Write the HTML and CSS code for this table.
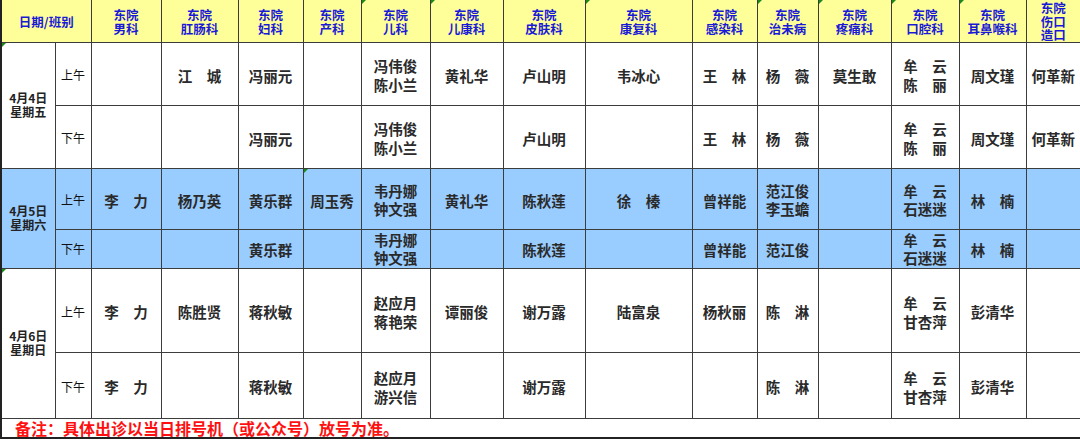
FILE: index.html
```html
<!DOCTYPE html>
<html lang="zh-CN">
<head>
<meta charset="utf-8">
<title>东院门诊排班表</title>
<link rel="stylesheet" href="styles.css">
</head>
<body>
<table class="sched">
  <colgroup>
    <col class="c-date"><col class="c-shift">
    <col class="w70"><col class="w77"><col class="w65"><col class="w58">
    <col class="w69"><col class="w73"><col class="w82"><col class="w107">
    <col class="w65"><col class="w61"><col class="w73"><col class="w68">
    <col class="w67"><col class="w55">
  </colgroup>
  <thead>
    <tr class="r-head">
      <th colspan="2" class="h-date">日期/班别</th>
      <th>东院<br>男科</th>
      <th>东院<br>肛肠科</th>
      <th>东院<br>妇科</th>
      <th>东院<br>产科</th>
      <th class="mk">东院<br>儿科</th>
      <th class="mk">东院<br>儿康科</th>
      <th>东院<br>皮肤科</th>
      <th class="mk">东院<br>康复科</th>
      <th>东院<br>感染科</th>
      <th class="mk">东院<br>治未病</th>
      <th class="mk">东院<br>疼痛科</th>
      <th class="mk">东院<br>口腔科</th>
      <th class="mk">东院<br>耳鼻喉科</th>
      <th class="h-3">东院<br>伤口<br>造口</th>
    </tr>
  </thead>
  <tbody>
    <tr class="r-a">
      <td rowspan="2" class="date mk">4月4日<br>星期五</td>
      <td class="shift">上午</td>
      <td></td><td>江　城</td><td>冯丽元</td><td></td>
      <td class="two">冯伟俊<br>陈小兰</td><td>黄礼华</td><td>卢山明</td><td>韦冰心</td>
      <td>王　林</td><td>杨　薇</td><td>莫生敢</td><td class="two">牟　云<br>陈　丽</td>
      <td>周文瑾</td><td>何革新</td>
    </tr>
    <tr class="r-a">
      <td class="shift">下午</td>
      <td></td><td></td><td>冯丽元</td><td></td>
      <td class="two">冯伟俊<br>陈小兰</td><td></td><td>卢山明</td><td></td>
      <td>王　林</td><td>杨　薇</td><td></td><td class="two">牟　云<br>陈　丽</td>
      <td>周文瑾</td><td>何革新</td>
    </tr>
    <tr class="r-b1 blue">
      <td rowspan="2" class="date">4月5日<br>星期六</td>
      <td class="shift">上午</td>
      <td>李　力</td><td>杨乃英</td><td>黄乐群</td><td class="mk">周玉秀</td>
      <td class="two">韦丹娜<br>钟文强</td><td>黄礼华</td><td>陈秋莲</td><td>徐　榛</td>
      <td>曾祥能</td><td class="two">范江俊<br>李玉蟾</td><td></td><td class="two">牟　云<br>石迷迷</td>
      <td>林　楠</td><td></td>
    </tr>
    <tr class="r-b2 blue">
      <td class="shift">下午</td>
      <td></td><td></td><td>黄乐群</td><td></td>
      <td class="two">韦丹娜<br>钟文强</td><td></td><td>陈秋莲</td><td></td>
      <td>曾祥能</td><td>范江俊</td><td></td><td class="two">牟　云<br>石迷迷</td>
      <td>林　楠</td><td></td>
    </tr>
    <tr class="r-c1">
      <td rowspan="2" class="date mk">4月6日<br>星期日</td>
      <td class="shift">上午</td>
      <td>李　力</td><td>陈胜贤</td><td>蒋秋敏</td><td></td>
      <td class="two">赵应月<br>蒋艳荣</td><td>谭丽俊</td><td>谢万露</td><td>陆富泉</td>
      <td>杨秋丽</td><td>陈　淋</td><td></td><td class="two">牟　云<br>甘杏萍</td>
      <td>彭清华</td><td></td>
    </tr>
    <tr class="r-c2">
      <td class="shift">下午</td>
      <td>李　力</td><td></td><td>蒋秋敏</td><td></td>
      <td class="two">赵应月<br>游兴信</td><td></td><td>谢万露</td><td></td>
      <td></td><td>陈　淋</td><td></td><td class="two">牟　云<br>甘杏萍</td>
      <td>彭清华</td><td></td>
    </tr>
    <tr class="r-note">
      <td colspan="16" class="note">备注：具体出诊以当日排号机（或公众号）放号为准。</td>
    </tr>
  </tbody>
</table>
</body>
</html>
```

FILE: styles.css
```css
html, body {
  margin: 0;
  padding: 0;
  background: #ffffff;
}

.sched {
  border-collapse: collapse;
  table-layout: fixed;
  width: 1080px;
  font-family: "Noto Sans CJK SC", "Noto Sans", sans-serif;
  color: #2a2a2a;
  border-left: 2px solid #222;
  border-right: 2px solid #222;
  border-bottom: 2px solid #222;
}

.c-date { width: 54px; }
.c-shift { width: 36px; }
.w70 { width: 70px; }
.w77 { width: 77px; }
.w65 { width: 65px; }
.w58 { width: 58px; }
.w69 { width: 69px; }
.w73 { width: 73px; }
.w82 { width: 82px; }
.w107 { width: 107px; }
.w61 { width: 61px; }
.w68 { width: 68px; }
.w67 { width: 67px; }
.w55 { width: 55px; }

.sched th,
.sched td {
  border: 1px solid #3c3c3c;
  padding: 0;
  text-align: center;
  vertical-align: middle;
  position: relative;
}

.sched th {
  background: #ffff99;
  color: #1a1ad6;
  font-size: 12.5px;
  font-weight: 700;
  line-height: 14px;
  border-top: none;
  padding-top: 2px;
}

.r-head { height: 42px; }
.sched th.h-3 { line-height: 13.5px; padding-top: 1px; }
.h-date { font-size: 13px; }

.sched td {
  font-size: 14.5px;
  font-weight: 700;
  line-height: 19px;
  white-space: nowrap;
  padding-top: 3px;
}

.sched td.two { line-height: 19px; }

.r-a { height: 63px; }
.r-b1 { height: 61px; }
.r-b2 { height: 39px; }
.r-c1 { height: 84px; }
.r-c2 { height: 66px; }
.r-note { height: 20px; }

.blue td { background: #99ccff; }
.blue td.two { line-height: 18px; }
.r-b2 td { padding-top: 1px; }

.r-b1 td, .r-c1 td { border-top-color: #5a7088; }

.sched td.date {
  font-size: 12px;
  line-height: 14px;
  font-weight: 700;
  color: #222;
  padding-top: 0;
}

.sched td.shift {
  font-size: 12px;
  font-weight: 400;
  color: #111;
  line-height: 14px;
}

.sched td.note {
  text-align: left;
  color: #ff1010;
  font-size: 16px;
  line-height: 18px;
  font-weight: 700;
  padding: 0 0 0 13px;
  background: #ffffff;
}

.mk::before {
  content: "";
  position: absolute;
  left: 0;
  top: 0;
  width: 0;
  height: 0;
  border-top: 4px solid #1a8a1a;
  border-right: 4px solid transparent;
}
```
